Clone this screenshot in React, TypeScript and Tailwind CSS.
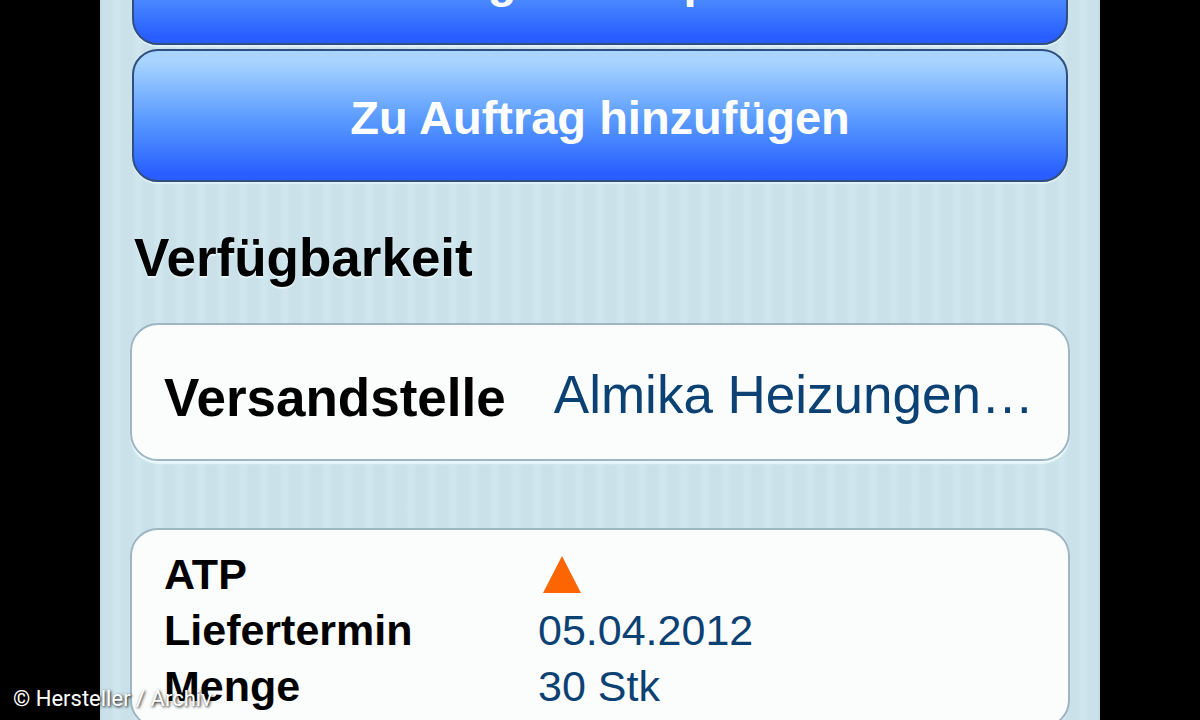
import type { ReactNode } from 'react'

function ActionButton({ children }: { children: ReactNode }) {
  return (
    <button
      type="button"
      className="h-[133px] w-full rounded-[26px] border-2 border-[#2f4f80] bg-linear-to-b from-[#a8d4ff] from-8% via-[#5e9eff] via-50% to-[#2a5dff] to-95% pt-1 text-[47px] leading-none font-bold text-white shadow-[0_2px_1px_#dff2f6]"
    >
      {children}
    </button>
  )
}

function DetailRow({ label, children }: { label: string; children: ReactNode }) {
  return (
    <div className="flex h-14 items-center">
      <dt className="w-[374px] shrink-0 font-bold text-black">{label}</dt>
      <dd className="text-[#0b4173]">{children}</dd>
    </div>
  )
}

function WarningTriangle() {
  return (
    <svg viewBox="0 0 40 40" className="ml-1 size-10" role="img" aria-label="Warnung">
      <path d="M20 2 L39 39 H1 Z" fill="#fd6402" />
    </svg>
  )
}

export default function App() {
  return (
    <div className="relative h-screen overflow-hidden bg-black font-['Liberation_Sans',sans-serif]">
      <main className="mx-auto min-h-full w-5/6 border-x-2 border-[#c3dbe2] bg-[repeating-linear-gradient(90deg,#cae1ea_0px,#cae1ea_9px,#cfe6ee_13px,#cfe6ee_17px,#cae1ea_21px)] px-7">
        <div className="-mt-[88px] flex flex-col gap-1 px-0.5">
          <ActionButton>Verfügbarkeit prüfen</ActionButton>
          <ActionButton>Zu Auftrag hinzufügen</ActionButton>
        </div>

        <h2 className="mt-[46px] pl-1 text-[53px] leading-[60px] font-bold text-black [text-shadow:0_2px_1px_#e6f5f8]">
          Verfügbarkeit
        </h2>

        <dl className="mt-[35px] flex h-[138px] items-center justify-between rounded-[28px] border-2 border-[#9db6c2] bg-[#fbfdfd] pt-3 pr-[34px] pl-8 text-[53px] leading-[60px] shadow-[0_3px_1px_#e8f7fa]">
          <dt className="font-bold text-black">Versandstelle</dt>
          <dd className="pb-1.5 text-[#0b4173]">Almika Heizungen…</dd>
        </dl>

        <dl className="mt-[67px] rounded-[28px] border-2 border-[#9db6c2] bg-[#fbfdfd] px-8 pt-4 pb-3 text-[43px] leading-[54px]">
          <DetailRow label="ATP">
            <WarningTriangle />
          </DetailRow>
          <DetailRow label="Liefertermin">05.04.2012</DetailRow>
          <DetailRow label="Menge">30 Stk</DetailRow>
        </dl>
      </main>

      <small className="absolute bottom-[7px] left-[13px] font-[Roboto,sans-serif] text-[22px] leading-7 text-white [text-shadow:1px_1px_3px_#000]">
        © Hersteller / Archiv
      </small>
    </div>
  )
}
